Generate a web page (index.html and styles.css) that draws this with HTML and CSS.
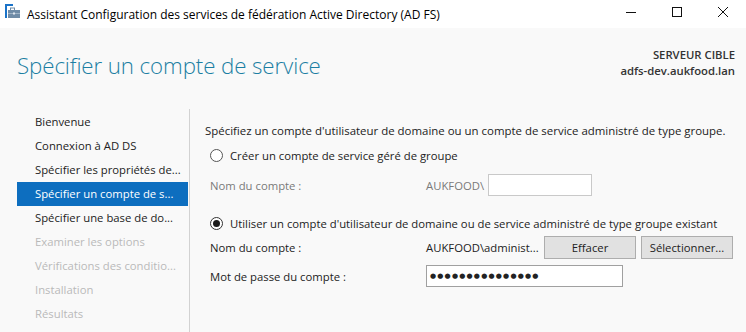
FILE: index.html
```html
<!DOCTYPE html>
<html lang="fr">
<head>
<meta charset="utf-8">
<title>Assistant Configuration AD FS</title>
<link rel="stylesheet" href="styles.css">
</head>
<body>
<div class="window">
  <div class="titlebar">
    <svg class="appicon" width="16" height="16" viewBox="0 0 16 16">
      <rect x="0" y="0" width="2" height="14" fill="#1a73c8"/>
      <rect x="0" y="0" width="8" height="2" fill="#1a73c8"/>
      <rect x="5.5" y="4" width="4" height="2.5" fill="none" stroke="#6f8ba6" stroke-width="1"/>
      <rect x="3" y="6" width="12" height="8" fill="#6f8ba6"/>
      <rect x="3" y="9" width="12" height="1" fill="#9fb3c6"/>
      <rect x="8" y="8.5" width="2" height="2" fill="#dfe6ee"/>
    </svg>
    <span class="wintitle">Assistant Configuration des services de fédération Active Directory (AD FS)</span>
    <div class="controls">
      <svg width="46" height="28" viewBox="0 0 46 28"><path d="M18 12.5h10" stroke="#111" stroke-width="1"/></svg>
      <svg width="46" height="28" viewBox="0 0 46 28"><rect x="18.5" y="7.5" width="9" height="9" fill="none" stroke="#111" stroke-width="1"/></svg>
      <svg width="46" height="28" viewBox="0 0 46 28"><path d="M18 7l10 10M28 7L18 17" stroke="#111" stroke-width="1"/></svg>
    </div>
  </div>
  <div class="main">
    <div class="header">
      <h1 class="pagetitle">Spécifier un compte de service</h1>
      <div class="target">
        <div>SERVEUR CIBLE</div>
        <div>adfs-dev.aukfood.lan</div>
      </div>
    </div>
    <div class="body">
      <nav class="steps">
        <div class="step">Bienvenue</div>
        <div class="step">Connexion à AD DS</div>
        <div class="step">Spécifier les propriétés de...</div>
        <div class="step active">Spécifier un compte de s...</div>
        <div class="step">Spécifier une base de do...</div>
        <div class="step disabled">Examiner les options</div>
        <div class="step disabled">Vérifications des conditio...</div>
        <div class="step disabled">Installation</div>
        <div class="step disabled">Résultats</div>
      </nav>
      <section class="content">
        <p class="intro">Spécifiez un compte d'utilisateur de domaine ou un compte de service administré de type groupe.</p>
        <div class="radio-row r1">
          <span class="radio"></span>
          <span>Créer un compte de service géré de groupe</span>
        </div>
        <div class="field-row f1 muted">
          <span class="label">Nom du compte :</span>
          <span class="value">AUKFOOD\</span>
          <span class="input small"></span>
        </div>
        <div class="radio-row r2">
          <span class="radio checked"></span>
          <span>Utiliser un compte d'utilisateur de domaine ou de service administré de type groupe existant</span>
        </div>
        <div class="field-row f2">
          <span class="label">Nom du compte :</span>
          <span class="value fixed">AUKFOOD\administ...</span>
          <span class="btn">Effacer</span>
          <span class="btn">Sélectionner...</span>
        </div>
        <div class="field-row f3">
          <span class="label">Mot de passe du compte :</span>
          <span class="input pwd">●●●●●●●●●●●●●●●</span>
        </div>
      </section>
    </div>
  </div>
</div>
</body>
</html>
```

FILE: styles.css
```css
* { box-sizing: border-box; }
html, body { margin: 0; padding: 0; }
body {
  width: 746px;
  height: 332px;
  overflow: hidden;
  font-family: "Open Sans", "Noto Sans", sans-serif;
  font-size: 11.3px;
  color: #222;
  background: #f9f9f9;
}
.window { display: flex; flex-direction: column; height: 332px; }
.titlebar {
  height: 28px;
  background: #fff;
  display: flex;
  align-items: center;
  flex-shrink: 0;
}
.appicon { margin-left: 5px; margin-top: -4px; flex-shrink: 0; }
.wintitle {
  margin-left: 6px;
  font-size: 12px;
  color: #000;
  flex: 1;
  white-space: nowrap;
}
.controls { display: flex; align-self: flex-start; }
.controls svg { display: block; }
.main { flex: 1; display: flex; flex-direction: column; }
.header {
  height: 81px;
  display: flex;
  justify-content: space-between;
  align-items: flex-start;
  padding: 0 11px 0 17px;
}
.pagetitle {
  margin: 22px 0 0 0;
  font-weight: 300;
  font-size: 22.3px;
  color: #1c7fa3;
  letter-spacing: -0.1px;
}
.target {
  margin-top: 19px;
  text-align: right;
  font-weight: 600;
  color: #333;
  line-height: 16px;
}
.body { flex: 1; display: flex; }
.steps {
  margin-left: 17px;
  width: 171px;
  padding-top: 1px;
}
.step {
  height: 24px;
  line-height: 24px;
  padding-left: 18px;
  color: #222;
  white-space: nowrap;
  overflow: hidden;
}
.step.active { background: #0d6ebf; color: #fff; }
.step.disabled { color: #b9b9b9; }
.content {
  flex: 1;
  border-left: 1px solid #d2d2d2;
  margin-left: 1px;
  padding: 14px 0 0 15px;
  display: flex;
  flex-direction: column;
}
.intro { margin: 0; line-height: 16px; white-space: nowrap; font-size: 11.45px; }
.radio-row {
  display: flex;
  align-items: center;
  gap: 7px;
  margin-left: 5px;
  height: 16px;
  white-space: nowrap;
}
.r1 { margin-top: 8px; }
.r2 { margin-top: 19px; }
.radio {
  width: 13px;
  height: 13px;
  border: 1px solid #333;
  border-radius: 50%;
  background: #fff;
  display: flex;
  align-items: center;
  justify-content: center;
  flex-shrink: 0;
}
.r1 .radio { border-color: #555; }
.radio.checked::after {
  content: "";
  width: 7px;
  height: 7px;
  border-radius: 50%;
  background: #1a1a1a;
}
.field-row {
  display: flex;
  align-items: center;
  margin-left: 5px;
  white-space: nowrap;
}
.label { width: 216px; flex-shrink: 0; }
.muted { color: #7a7a7a; }
.f1 { margin-top: 11px; height: 22px; }
.f2 { margin-top: 5px; height: 23px; }
.f3 { margin-top: 6px; height: 22px; }
.value { margin-right: 4px; }
.value.fixed { width: 114px; margin-right: 4px; }
.input {
  height: 22px;
  border: 1px solid #c9c9c9;
  background: #fff;
}
.input.small { width: 104px; }
.input.pwd {
  width: 197px;
  border-color: #a0a0a0;
  font-family: "DejaVu Sans", sans-serif;
  font-size: 7px;
  letter-spacing: 1.2px;
  color: #222;
  line-height: 20px;
  padding-left: 3px;
}
.btn {
  height: 23px;
  width: 92px;
  border: 1px solid #adadad;
  background: #e1e1e1;
  display: flex;
  align-items: center;
  justify-content: center;
  color: #222;
  margin-right: 5px;
}
```
